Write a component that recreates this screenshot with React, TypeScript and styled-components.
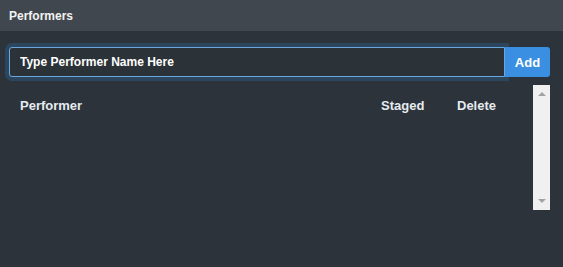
import styled, { createGlobalStyle } from 'styled-components';

const GlobalStyle = createGlobalStyle`
  html, body {
    margin: 0;
    padding: 0;
    background: #2c333a;
  }

  body {
    font-family: "Liberation Sans", Arial, sans-serif;
  }
`;

const Panel = styled.div`
  width: 563px;
  height: 267px;
  background: #2c333a;
  display: flex;
  flex-direction: column;
`;

const PanelHeader = styled.div`
  height: 31px;
  background: #41474e;
  color: #f2f2f2;
  font-size: 12px;
  font-weight: 700;
  display: flex;
  align-items: center;
  padding: 0 9px;
  box-sizing: border-box;
`;

const PanelBody = styled.div`
  padding: 16px 13px 0 9px;
  display: flex;
  flex-direction: column;
  gap: 8px;
`;

const AddRow = styled.div`
  display: flex;
  height: 30px;
`;

const NameInput = styled.input`
  flex: 1;
  min-width: 0;
  height: 30px;
  box-sizing: border-box;
  padding: 0 10px;
  background: #2b3238;
  color: #ffffff;
  font-family: inherit;
  font-size: 12px;
  font-weight: 700;
  border: 1px solid #6aa6df;
  border-radius: 3px 0 0 3px;
  box-shadow: 0 0 0 4px #2c465e;
  outline: none;
  caret-color: #ffffff;
`;

const AddButton = styled.button`
  width: 45px;
  height: 30px;
  border: none;
  border-radius: 0 3px 3px 0;
  background: #3b8fe2;
  color: #ffffff;
  font-family: inherit;
  font-size: 13px;
  font-weight: 700;
  padding: 0;
  cursor: pointer;
  position: relative;
`;

const ListArea = styled.div`
  display: flex;
  height: 125px;
`;

const Table = styled.div`
  flex: 1;
  display: grid;
  grid-template-columns: 1fr 76px 87px;
  align-content: start;
`;

const HeadCell = styled.div`
  height: 40px;
  line-height: 42px;
  padding-left: 11px;
  color: #e6ebf0;
  font-size: 13px;
  font-weight: 700;
`;

const Scrollbar = styled.div`
  width: 17px;
  background: #f0f0f0;
  display: flex;
  flex-direction: column;
  justify-content: space-between;
  align-items: center;
  padding: 7px 0;
  box-sizing: border-box;
`;

const Arrow = styled.div<{ dir: 'up' | 'down' }>`
  width: 0;
  height: 0;
  border-left: 4px solid transparent;
  border-right: 4px solid transparent;
  ${(p) =>
    p.dir === 'up'
      ? 'border-bottom: 4px solid #a3a3a3;'
      : 'border-top: 4px solid #a3a3a3;'}
`;

export default function App() {
  return (
    <Panel>
      <GlobalStyle />
      <PanelHeader>Performers</PanelHeader>
      <PanelBody>
        <AddRow>
          <NameInput defaultValue="Type Performer Name Here" autoFocus />
          <AddButton type="button">Add</AddButton>
        </AddRow>
        <ListArea>
          <Table>
            <HeadCell>Performer</HeadCell>
            <HeadCell>Staged</HeadCell>
            <HeadCell>Delete</HeadCell>
          </Table>
          <Scrollbar>
            <Arrow dir="up" />
            <Arrow dir="down" />
          </Scrollbar>
        </ListArea>
      </PanelBody>
    </Panel>
  );
}
